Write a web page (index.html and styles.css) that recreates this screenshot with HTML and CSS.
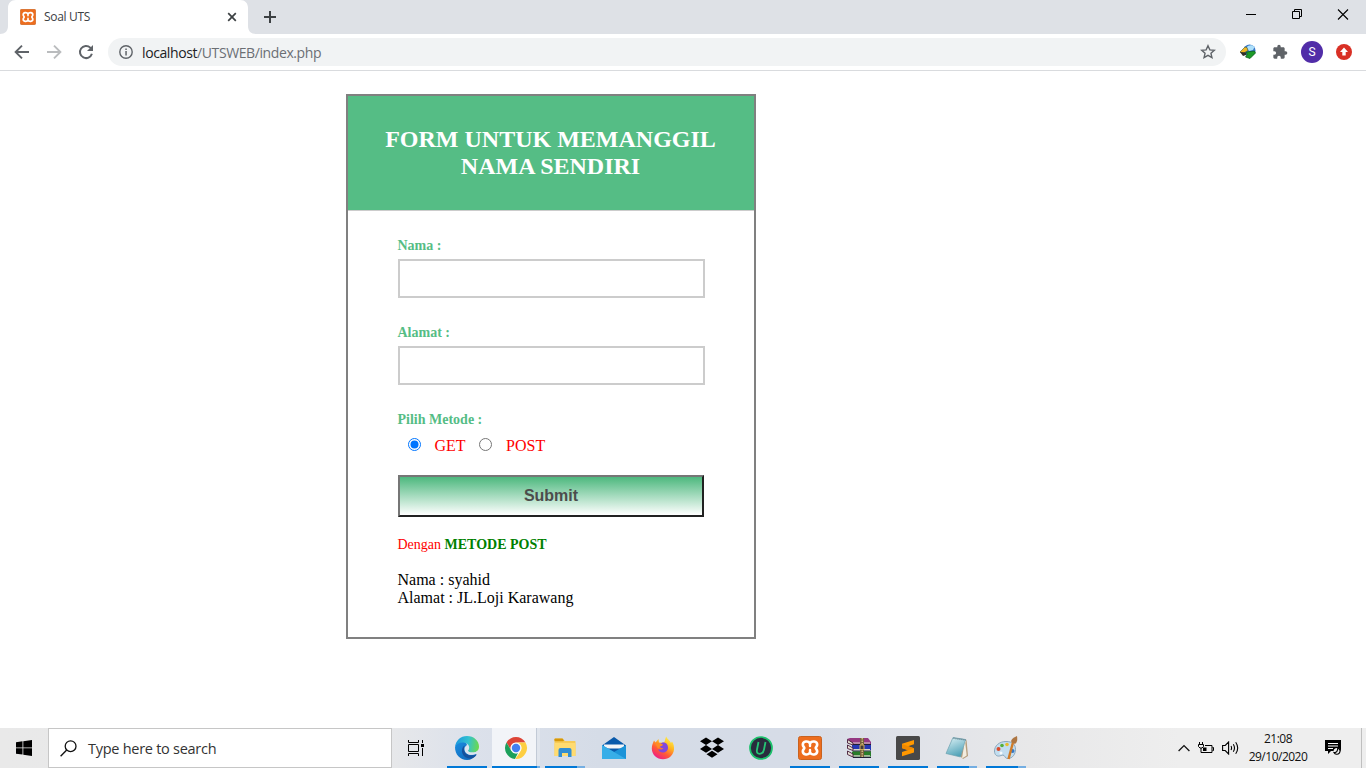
FILE: index.html
```html
<!DOCTYPE html>
<html lang="en">
<head>
<meta charset="utf-8">
<title>Soal UTS</title>
<link rel="stylesheet" href="styles.css">
</head>
<body>
<svg class="defs" width="0" height="0">
  <symbol id="xampp" viewBox="0 0 24 24">
    <rect x=".5" y=".5" width="23" height="23" rx="2" fill="#ed6d1e" stroke="#c9621f"/>
    <path d="M12 7.300C10.300 4.500 4.800 5 4.800 8.700c0 1.800 1.500 2.300 1.500 3.300s-1.500 1.500-1.500 3.300c0 3.700 5.500 4.200 7.200 1.400 1.700 2.800 7.200 2.300 7.200-1.400 0-1.800-1.500-2.300-1.500-3.300s1.500-1.500 1.500-3.300c0-3.700-5.500-4.200-7.200-1.400z" fill="#ed6d1e" stroke="#fff" stroke-width="2.600" stroke-linejoin="round"/>
    <path d="M12 7v3M12 14v3" stroke="#fff" stroke-width="2.400" stroke-linecap="round"/>
  </symbol>
</svg>

<header class="tabs">
  <svg class="tab-shape" width="264" height="34" viewBox="0 0 264 34"><path d="M0 34c5 0 8-3 8-8V8c0-5 3-8 8-8h224c5 0 8 3 8 8v18c0 5 3 8 8 8z" fill="#fff"/></svg>
  <div class="tab">
    <svg width="16" height="16"><use href="#xampp"/></svg>
    <span class="tab-title">Soal UTS</span>
    <svg class="tab-close" width="10" height="10" viewBox="0 0 10 10"><path d="M1.200 1.200l7.600 7.600M8.800 1.200L1.200 8.800" stroke="#3c4043" stroke-width="1.700"/></svg>
  </div>
  <svg class="new-tab" width="12" height="12" viewBox="0 0 12 12"><path d="M6 0v12M0 6h12" stroke="#3c4043" stroke-width="2"/></svg>
  <div class="window-buttons">
    <svg width="46" height="30" viewBox="0 0 46 30"><path d="M18 14.500h10" stroke="#000"/></svg>
    <svg width="46" height="30" viewBox="0 0 46 30"><path d="M18.500 11.500h7v7h-7zM20.500 11V9.500h7v7H26" fill="none" stroke="#000"/></svg>
    <svg width="46" height="30" viewBox="0 0 46 30"><path d="M18 9.500l10 10M28 9.500l-10 10" stroke="#000" stroke-width="1.100"/></svg>
  </div>
</header>

<nav class="toolbar">
  <div class="nav-buttons">
    <svg width="16" height="16" viewBox="0 0 16 16"><path d="M15 8H2M8 1.600L1.600 8 8 14.400" fill="none" stroke="#5f6368" stroke-width="1.900"/></svg>
    <svg width="16" height="16" viewBox="0 0 16 16"><path d="M1 8h13M8 1.600L14.400 8 8 14.400" fill="none" stroke="#babcbe" stroke-width="1.900"/></svg>
    <svg width="16" height="16" viewBox="0 0 16 16"><path d="M13.900 9.800A6.100 6.100 0 1 1 12.300 3.600L14 5.300" fill="none" stroke="#5f6368" stroke-width="2"/><path d="M15 1v6H9z" fill="#5f6368"/></svg>
  </div>
  <div class="address">
    <svg width="16" height="16" viewBox="0 0 16 16"><circle cx="8" cy="8" r="6.200" fill="none" stroke="#5f6368" stroke-width="1.400"/><path d="M7.300 7h1.500v4.400H7.300zM7.300 4.500h1.500V6H7.300z" fill="#5f6368"/></svg>
    <span class="url"><b>localhost</b>/UTSWEB/index.php</span>
    <svg class="star" width="16" height="16" viewBox="0 0 16 16"><path d="M8 1.800l1.850 4.100 4.450.4-3.350 3 1 4.400L8 11.400l-3.950 2.300 1-4.400-3.350-3 4.450-.4z" fill="none" stroke="#5f6368" stroke-width="1.400"/></svg>
  </div>
  <svg class="ext-idm" width="18" height="16" viewBox="0 0 18 16"><circle cx="10.500" cy="6.500" r="6" fill="#3978c8"/><path d="M7.500 3.500c2-3 6-3 8-.5l-1.500 3-4 1z" fill="#aee0fa"/><path d="M1 8l5-5 2 .5 1 3-5 3z" fill="#f2b622" stroke="#3b5c35" stroke-width=".6"/><path d="M1 8l3 4 3-1V8.500z" fill="#31302a"/><path d="M7.500 8l8-1 1 2-5.500 5.500-4.500-1.500 1.500-2z" fill="#1c9a26" stroke="#08571a" stroke-width=".7"/></svg>
  <svg class="ext-puzzle" width="16" height="16" viewBox="0 0 24 24"><path d="M20.500 11H19V7c0-1.100-.9-2-2-2h-4V3.500a2.500 2.500 0 0 0-5 0V5H4c-1.100 0-2 .9-2 2v3.800h1.500a2.700 2.700 0 0 1 0 5.400H2V20c0 1.100.9 2 2 2h3.800v-1.500a2.700 2.700 0 0 1 5.400 0V22H17c1.100 0 2-.9 2-2v-4h1.500a2.500 2.500 0 0 0 0-5z" fill="#5f6368"/></svg>
  <span class="avatar">S</span>
  <svg class="update" width="16" height="16" viewBox="0 0 16 16"><circle cx="8" cy="8" r="8" fill="#d93025"/><path d="M8 3.600L12 8H9.700v3.500H6.300V8H4z" fill="#fff"/></svg>
</nav>

<main class="page">
  <section class="card">
    <h2 class="card-title">FORM UNTUK MEMANGGIL NAMA SENDIRI</h2>
    <form class="card-body">
      <label class="label" for="nama">Nama :</label>
      <input class="field" id="nama" type="text">
      <label class="label" for="alamat">Alamat :</label>
      <input class="field" id="alamat" type="text">
      <div class="label">Pilih Metode :</div>
      <div class="methods">
        <svg width="13" height="13" viewBox="0 0 13 13"><circle cx="6.500" cy="6.500" r="6" fill="#fff" stroke="#0075ff"/><circle cx="6.500" cy="6.500" r="4" fill="#0075ff"/></svg>
        <span class="method">GET</span>
        <svg width="13" height="13" viewBox="0 0 13 13"><circle cx="6.500" cy="6.500" r="6" fill="#fff" stroke="#767676"/></svg>
        <span class="method">POST</span>
      </div>
      <button class="submit" type="button">Submit</button>
      <p class="used">Dengan <b>METODE POST</b></p>
      <p class="result">Nama : syahid<br>Alamat : JL.Loji Karawang</p>
    </form>
  </section>
</main>

<footer class="taskbar">
  <div class="start"><svg width="16" height="16" viewBox="0 0 16 16"><path d="M0 2.200l6.500-.9v6.200H0zM7.300 1.200L16 0v7.500H7.300zM0 8.300h6.500v6.300L0 13.700zM7.300 8.300H16V16l-8.700-1.300z"/></svg></div>
  <div class="search">
    <svg width="17" height="17" viewBox="0 0 17 17"><circle cx="10.600" cy="6.200" r="5.400" fill="none" stroke="#111" stroke-width="1.300"/><path d="M6.700 10.100L.6 16.200" stroke="#111" stroke-width="1.400"/></svg>
    <span class="search-text">Type here to search</span>
  </div>
  <div class="app task-view">
    <svg width="18" height="16" viewBox="0 0 18 16"><path d="M1.500 0v2.500h10V0M1.500 16v-2.500h10V16M1.500 4.500h10v7h-10zM15.500 0v3M15.500 8v8" fill="none" stroke="#000" stroke-width="1"/><path d="M14 4h3v3h-3z"/></svg>
  </div>
  <div class="app open">
    <svg width="24" height="24" viewBox="0 0 24 24">
      <defs><linearGradient id="eg" x1="0" y1=".3" x2="1" y2=".4"><stop offset="0" stop-color="#1996df"/><stop offset=".55" stop-color="#32c2d0"/><stop offset="1" stop-color="#6bd94e"/></linearGradient><linearGradient id="eb" x1="0" y1="0" x2="1" y2="1"><stop offset="0" stop-color="#1b8de0"/><stop offset="1" stop-color="#0b62b4"/></linearGradient></defs>
      <path d="M0 11C2 5 8 4 12 8l-2 5c0 5 5 7 11.500 5C19 22 16 24 12 24 5 24 0 18.500 0 11z" fill="url(#eb)"/>
      <path d="M0 11C.8 4.500 5.500 0 12 0c7 0 12 5 12 10.500 0 4-3 6-6.500 6-2.500 0-4.500-.8-4.500-1.800 0-.8 1.200-1.200 1.200-3.200 0-2.800-2.800-5-6.200-5C4 6.500 1 8.500 0 11z" fill="url(#eg)"/>
      <path d="M9.500 9.500C4.500 13 7 22.500 15 22.500c3 0 5-1.500 6.800-4-5.300 2.300-11.800 1-12.600-4.300-.3-1.800-.2-3.400.3-4.700z" fill="#15519c"/>
      <path d="M10.200 10.500c1.200-1 3.400-.5 3.800 1 .3 1.500-1 2-1 3.200 0 1.300 2 2 4.500 1.800 2 0 3.500-.5 5-1.500-.5 1.500-1.500 2.800-3 3.300-5 1.500-9.500-.5-10-4.500-.1-1.200.1-2.500.7-3.300z" fill="#dce4ef"/>
    </svg>
    <i class="line"></i>
  </div>
  <div class="app active">
    <svg width="24" height="24" viewBox="0 0 24 24"><circle cx="12" cy="12" r="11" fill="#fff"/><path d="M2.500 6.500A11 11 0 0 1 21.500 6.500H12A5.500 5.500 0 0 0 7.200 14.700z" fill="#dc4437"/><path d="M2.500 6.500l4.750 8.250A5.500 5.500 0 0 0 14 17.100L11 23A11 11 0 0 1 2.500 6.500z" fill="#1ca05b"/><path d="M21.500 6.500A11 11 0 0 1 11.300 23l5.450-8.250A5.500 5.500 0 0 0 12 6.500z" fill="#fdce42"/><circle cx="12" cy="12" r="5.300" fill="#f3f6fb"/><circle cx="12" cy="12" r="4.200" fill="#437ff0"/></svg>
    <i class="line stacked"></i>
  </div>
  <div class="app open">
    <svg width="22" height="20" viewBox="0 0 22 20"><path d="M.5 2.500V1.200Q.5.500 1.200.5h7.300L11 3h10q.5 0 .5.600V18h-21z" fill="#f7cb57"/><path d="M.5 3.200V1.200Q.5.500 1.200.5h7.300l1.500 2-.8.700z" fill="#d69709"/><path d="M.5 5h21v13H.5z" fill="#ffdb70"/><path d="M4.500 19v-7q0-2 2-2h9q2 0 2 2v7H14v-4H8v4z" fill="#318ed3"/></svg>
    <i class="line multi"></i>
  </div>
  <div class="app">
    <svg width="24" height="24" viewBox="0 0 24 24"><path d="M0 9.500L12 1l12 8.500V23H0z" fill="#0a5aab"/><path d="M2 8.500h20v4H2z" fill="#f4f5f7"/><path d="M0 9l12 7L24 9v14H0z" fill="#1b93d8"/><path d="M0 9l24 14H0z" fill="#37aee8"/></svg>
  </div>
  <div class="app">
    <svg width="24" height="24" viewBox="0 0 24 24"><defs><linearGradient id="fx" x1=".85" y1=".05" x2=".25" y2="1"><stop offset="0" stop-color="#fff44f"/><stop offset=".35" stop-color="#ffb51f"/><stop offset=".65" stop-color="#ff5a36"/><stop offset="1" stop-color="#ed168f"/></linearGradient></defs><path d="M3 4.500l1.500 2 3-3.500.5 3.500 5 .2c1-1 1-4.200 2.200-6.200C16 3 19 4.500 20 7l1-1.500c1.600 2.500 2.300 4.500 2 8C22.500 19 18 23.300 12 23.300S.8 18.700.8 12.500C.8 9 2 7 3 4.500z" fill="url(#fx)"/><path d="M8 8.500l4-2.200c3 .2 5 2.200 5 5.200 0 3.500-2.500 5-5 5-2.600 0-4.500-1.500-4.800-3.500 2 1 4 .8 5.300-.8-1.800.5-4.500-1-4.500-3.700z" fill="#8147dc"/><path d="M4 7c1-.7 2.500-.7 4 0l4 1.500c-.5 1.500-2.200 1.600-3.300 2.200-.8.500-.7 1.300-1.500 2.300z" fill="#ff8b24"/></svg>
  </div>
  <div class="app">
    <svg width="24" height="22" viewBox="0 0 24 22"><path d="M6 .5l6 3.800-6 3.800-6-3.800zM18 .5l6 3.800-6 3.800-6-3.800zM6 8.100l6 3.800-6 3.800-6-3.800zM18 8.100l6 3.800-6 3.800-6-3.800zM12 13.700l5.500 3.500-5.500 3.600-5.500-3.600z"/></svg>
  </div>
  <div class="app">
    <svg width="24" height="24" viewBox="0 0 24 24"><circle cx="12" cy="12" r="11" fill="#292d3d" stroke="#1cc26c" stroke-width="1.700"/><path d="M9.500 6L8 13.500c-.6 3 .4 4.300 2.700 4.300 2.400 0 3.700-1.300 4.300-4.300L16.500 6" fill="none" stroke="#25c574" stroke-width="1.800"/></svg>
  </div>
  <div class="app open"><svg width="24" height="24"><use href="#xampp"/></svg><i class="line"></i></div>
  <div class="app open">
    <svg width="24" height="20" viewBox="0 0 24 20"><path d="M0 1l3-1h18l3 4v2H6z" fill="#953882"/><path d="M6 6h18v1H6zM6 12.500h18v1.200H6zM6 18.800h18V20H6z" fill="#202035"/><path d="M5 7h19v5H5z" fill="#2438b4"/><path d="M5 13.500h19v5H5z" fill="#287d29"/><path d="M6 5h17M6 11.500h17M6 17.800h17" stroke="#d9d4cb"/><path d="M.5 1.500v3.500l5.500 2V5zM.5 7v3.500l5.500 2V10zM.5 13v3.500l5.500 2.500v-3z" fill="#e5ddd1" stroke="#451b38" stroke-width=".9"/><path d="M13 0h4v19h-4z" fill="#76633e"/><path d="M15.200 0v19" stroke="#e2cb8d" stroke-width="1.200" stroke-dasharray="1.500 1"/><path d="M13 7h4v4.500h-4z" fill="#423a39" stroke="#cfad58"/></svg>
    <i class="line"></i>
  </div>
  <div class="app open">
    <svg width="24" height="24" viewBox="0 0 24 24"><rect width="24" height="24" rx="1.500" fill="#484848"/><path d="M18 4v4.200l-6 2 6 2v4.300L6 20.300v-4.200l6-2-6-2V7.800z" fill="#ff9800"/><path d="M6 7.900l12 4.300-6 2-6-2z" fill="#ee8800"/></svg>
    <i class="line"></i>
  </div>
  <div class="app open">
    <svg width="24" height="24" viewBox="0 0 24 24"><defs><linearGradient id="np" x1=".2" y1="0" x2=".6" y2="1"><stop offset="0" stop-color="#d6eef3"/><stop offset="1" stop-color="#4b9fb5"/></linearGradient></defs><path d="M21.500 3.500L23 20l-5 3-3-3z" fill="#b59d7d"/><path d="M20 4l1.700 15.500-4.700 3z" fill="#f2ede0"/><path d="M8 1.500L20.500 3.500 15.500 21 1 17.500z" fill="url(#np)" stroke="#6aa0af" stroke-width=".7"/><path d="M8.500 2.200L21 4" stroke="#597783" stroke-width="1.500" stroke-dasharray="1 1"/></svg>
    <i class="line multi"></i>
  </div>
  <div class="app open">
    <svg width="26" height="24" viewBox="0 0 26 24"><path d="M13 5.500C6 5.500 1.500 10 1.500 15c0 4 2.500 5.500 5 5 2.200-.5 3-1.500 4.500-.5 1.200 1 1 3 4 3 4.500 0 7.500-4.500 7.500-9 0-5-3-8-9.500-8z" fill="#c2ddef" stroke="#809fb5" stroke-width=".9"/><circle cx="5.500" cy="13" r="2" fill="#da4b2c"/><circle cx="9" cy="9.500" r="1.800" fill="#56af38"/><circle cx="14" cy="8.500" r="1.800" fill="#e8bb2e"/><circle cx="8" cy="17" r="1.500" fill="#f6fafc"/><circle cx="19.500" cy="15" r="2" fill="#3777c3"/><path d="M20.500 4.500L15.500 23" stroke="#d17b27" stroke-width="2.400"/><path d="M18 5.500c0-2 2.500-4 6-5.500 .5 3.500.5 6-2 8z" fill="#ad7643"/></svg>
    <i class="line multi"></i>
  </div>
  <div class="tray">
    <svg width="12" height="8" viewBox="0 0 12 8"><path d="M.6 7L6 1.600 11.400 7" fill="none" stroke="#111" stroke-width="1.300"/></svg>
    <svg width="16" height="14" viewBox="0 0 16 14"><path d="M1.500 1v2M4.500 1v2M.5 3.500h5v2L4 7H2L.5 5.500zM3 7v4.500h11v-7H7M14.500 6.500h1v3h-1" fill="none" stroke="#000"/><path d="M5 6.500h3.500V10H5z"/></svg>
    <svg width="17" height="14" viewBox="0 0 17 14"><path d="M.6 4.500h2.600L6.600 1v12L3.200 9.500H.6zM9 5q1.200 2 0 4M11.300 3.200q2.400 3.800 0 7.600M13.700 1.300q4 5.700 0 11.400" fill="none" stroke="#000" stroke-width="1.100"/></svg>
  </div>
  <div class="clock"><span class="time">21:08</span><span class="date">29/10/2020</span></div>
  <svg class="notice" width="17" height="16" viewBox="0 0 17 16"><path d="M0 0h16v11H6l-3 3v-3H0z"/><path d="M3 3.500h10M3 6h10M3 8.500h5" stroke="#fff"/><circle cx="12" cy="11.500" r="3.500" fill="#eee"/><path d="M12.800 8A3.200 3.200 0 1 1 9 12.500q3.600 .6 3.800-4.500z" fill="none" stroke="#000" stroke-width="1.200"/></svg>
  <span class="peek"></span>
</footer>
</body>
</html>
```
FILE: styles.css
```css
* { box-sizing: border-box; }
body {
  margin: 0;
  width: 1366px;
  height: 768px;
  overflow: hidden;
  display: flex;
  flex-direction: column;
  background: #fff;
  font-family: "Open Sans", "Noto Sans", sans-serif;
}
svg { display: block; flex: none; }
.defs { position: absolute; }

/* browser window */
.tabs { position: relative; height: 34px; flex: none; display: flex; align-items: center; background: #dee1e6; }
.tab-shape { position: absolute; left: 0; top: 0; }
.tab { position: relative; width: 248px; padding: 0 11px 0 20px; display: flex; align-items: center; }
.tab-title { margin-left: 8px; font-size: 12px; letter-spacing: -.3px; color: #3c4043; line-height: 16px; }
.tab-close { margin-left: auto; }
.new-tab { margin-left: 16px; }
.window-buttons { display: flex; margin-left: auto; height: 34px; }
.toolbar { height: 37px; flex: none; display: flex; align-items: center; border-bottom: 1px solid #d9dbde; background: #fff; }
.nav-buttons { display: flex; gap: 16px; padding: 0 14px; width: 108px; }
.address { width: 1118px; height: 28px; border-radius: 14px; padding: 0 10px; display: flex; align-items: center; background: #f1f3f4; }
.url { margin-left: 8px; font-size: 14px; letter-spacing: -.4px; color: #6b6f74; white-space: nowrap; }
.url b { font-weight: 400; color: #202124; }
.star { margin-left: auto; }
.ext-idm { margin-left: 13px; }
.ext-puzzle { margin-left: 15px; }
.avatar { width: 22px; height: 22px; margin-left: 13px; border-radius: 50%; background: #512da8; color: #fff; font: 12px/22px Roboto, sans-serif; text-align: center; }
.update { margin-left: 13px; }

/* form page */
.page { flex: 1; padding: 23px 0 0 346px; font-family: "Liberation Serif", serif; }
.card { width: 410px; height: 545px; border: 2px solid #808080; }
.card-title { margin: 0; height: 115px; padding: 30px 31px 0 30px; border-bottom: 1px solid #ccc; background: #55bd85; color: #fff; font-size: 24px; line-height: 27px; text-align: center; }
.card-body { padding: 27px 49px 0 50px; display: flex; flex-direction: column; }
.label { height: 16px; margin-bottom: 5px; color: #55bd85; font-size: 14px; font-weight: 700; line-height: 16px; margin-left: -.5px; }
.field { width: 307px; height: 39px; margin: 0 0 27px; border: 2px solid #ccc; background: #fff; outline: 0; }
.methods { display: flex; height: 18px; margin: 4px 0 20px; padding: 0 0 0 10px; align-items: flex-start; }
.methods svg { margin-top: 1px; }
.method { margin: 0 13px 0 13.5px; font-size: 16px; line-height: 18px; color: red; }
.method:last-child { margin-left: 14.5px; }
.submit { width: 306px; height: 42px; padding: 0; border: 2px solid; border-color: #767676 #212121 #212121 #767676; background: linear-gradient(#4db87e, #fff); color: #4c4c4c; font: bold 16px "Liberation Sans", sans-serif; }
.used { margin: 20px 0 0 -.5px; font-size: 14px; line-height: 16px; color: red; }
.used b { color: green; }
.result { margin: 18px 0 0 -.5px; font-size: 16px; line-height: 18px; color: #000; }

/* desktop taskbar */
.taskbar { height: 40px; flex: none; display: flex; align-items: center; background: linear-gradient(90deg, #e9e9e9 0, #e7e8ea 390px, #dce1eb 470px, #d5dce7 600px, #d6dce7 790px, #dfe2e9 900px, #e8e8e9 1030px, #eee 1180px); }
.start { width: 48px; display: flex; justify-content: center; }
.search { width: 344px; height: 40px; padding-left: 11px; display: flex; align-items: center; border: 1px solid #c6c6c6; background: #fff; }
.search-text { margin-left: 11px; font-size: 14.5px; letter-spacing: -.27px; color: #333; }
.app { position: relative; width: 49px; height: 40px; display: flex; align-items: center; justify-content: center; }
.task-view { width: 50px; padding-right: 2px; }
.active::before { content: ""; position: absolute; left: 1px; top: 0; width: 48px; height: 40px; background: linear-gradient(90deg, #f2f4f8 44px, #c2cad6 44px, #c2cad6 45px, #e0e5ed 45px); }
.active svg { position: relative; }
.line { position: absolute; left: 5px; bottom: 0; width: 40px; height: 2px; background: #0078d7; }
.line.stacked { left: 1px; width: 48px; background: linear-gradient(90deg, #0078d7 45px, #74aee2 45px); }
.line.multi { background: linear-gradient(90deg, #0078d7 32px, #74aee2 32px); }
.tray { width: 215px; padding-right: 1px; display: flex; align-items: center; justify-content: flex-end; gap: 8px; margin-left: -5px; }
.clock { width: 76px; display: flex; flex-direction: column; align-items: center; font-size: 12px; line-height: 18px; letter-spacing: -.5px; color: #111; }
.notice { margin-left: 9px; }
.peek { width: 1px; height: 40px; margin-left: auto; margin-right: 4px; background: #bfbfbf; }
```
